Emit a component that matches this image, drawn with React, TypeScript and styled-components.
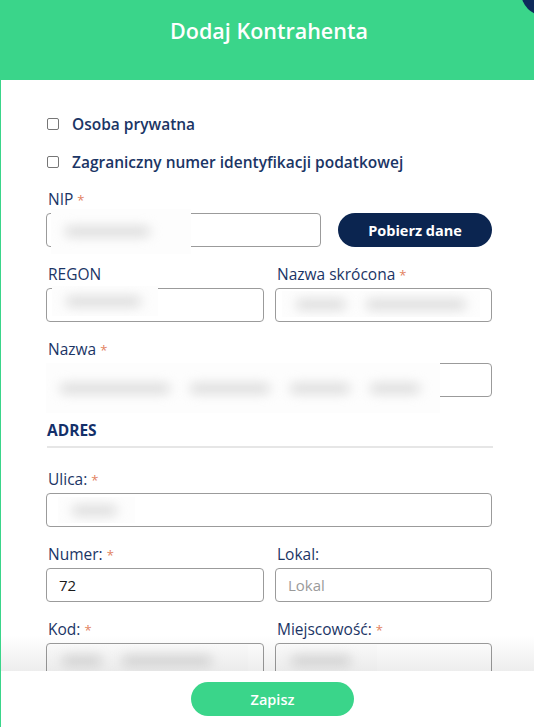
import styled, { createGlobalStyle } from 'styled-components'

const GlobalStyle = createGlobalStyle`
  html, body {
    margin: 0;
    padding: 0;
    height: 100%;
    overflow: hidden;
    background: #3ad58a;
  }
  * {
    box-sizing: border-box;
  }
`

const font = `"Open Sans", Lato, sans-serif`

const Modal = styled.div`
  position: relative;
  display: flex;
  flex-direction: column;
  width: 534px;
  height: 727px;
  background: #3ad58a;
  font-family: ${font};
  overflow: hidden;
`

const CloseDot = styled.div`
  position: absolute;
  left: 521px;
  top: -32px;
  width: 48px;
  height: 48px;
  border-radius: 50%;
  background: #0e2b5b;
`

const Header = styled.header`
  height: 80px;
  flex: none;
  display: flex;
  justify-content: center;
  padding-top: 16px;
  padding-left: 4px;
  color: #fff;
  font-size: 21.5px;
  font-weight: 600;
`

const Sheet = styled.div`
  flex: 1;
  display: flex;
  flex-direction: column;
  margin-left: 1px;
  background: #fff;
  min-height: 0;
`

const Scroll = styled.div`
  flex: 1;
  min-height: 0;
  overflow: hidden;
  padding: 33px 41px 0 45px;
`

const CheckRow = styled.label`
  display: flex;
  align-items: center;
  gap: 13px;
  height: 22px;
  margin-left: 1px;
  margin-bottom: 16px;
  color: #1b3565;
  font-size: 15.5px;
  font-weight: 600;
`

const Box = styled.span`
  width: 12px;
  height: 12px;
  border: 1px solid #767676;
  border-radius: 2px;
  background: #fff;
`

const Row = styled.div<{ $cols: string; $gap?: number }>`
  display: grid;
  grid-template-columns: ${p => p.$cols};
  column-gap: ${p => p.$gap ?? 11}px;
  align-items: end;
  margin-bottom: 17px;
`

const Field = styled.div`
  display: flex;
  flex-direction: column;
`

const Label = styled.div`
  height: 20px;
  line-height: 20px;
  margin: 0 0 4px 2px;
  color: #1b3565;
  font-size: 15.5px;
  font-weight: 500;
`

const Star = styled.span`
  color: #e2825f;
  margin-left: 4px;
  font-size: 13px;
`

const InputWrap = styled.div`
  position: relative;
  height: 34px;
`

const Input = styled.input`
  width: 100%;
  height: 34px;
  border: 1px solid #9b9b9b;
  border-radius: 4px;
  padding: 0 12px;
  font-family: ${font};
  font-size: 15px;
  color: #1a1a1a;
  background: #fff;
  outline: none;

  &::placeholder {
    color: #9a9a9a;
  }
`

const Redact = styled.div`
  position: absolute;
  display: flex;
  align-items: center;
  gap: 20px;
  padding: 0 14px;
  background: #fdfdfd;
  overflow: hidden;
`

const Blob = styled.span<{ $w: number }>`
  flex: none;
  width: ${p => p.$w}px;
  height: 9px;
  border-radius: 6px;
  background: #d6d6d6;
  filter: blur(6px);
`

const DarkButton = styled.button`
  height: 34px;
  border: none;
  border-radius: 17px;
  background: #0b2550;
  color: #fff;
  font-family: ${font};
  font-size: 14.5px;
  font-weight: 700;
  cursor: pointer;
`

const Section = styled.div`
  margin: 23px 0 0 1px;
  padding-bottom: 6px;
  border-bottom: 2px solid #e6e6e6;
  color: #14306a;
  font-size: 15.5px;
  font-weight: 700;
  line-height: 20px;
`

const SectionGap = styled.div`
  height: 21px;
`

const Footer = styled.footer`
  position: relative;
  flex: none;
  height: 56px;
  display: flex;
  justify-content: center;
  align-items: center;
  padding-left: 10px;
  background: #fff;

  &::before {
    content: '';
    position: absolute;
    left: 0;
    right: 0;
    top: -36px;
    height: 36px;
    background: linear-gradient(rgba(0, 0, 0, 0), rgba(0, 0, 0, 0.07));
  }
`

const SaveButton = styled.button`
  width: 163px;
  height: 34px;
  border: none;
  border-radius: 17px;
  background: #3ad58a;
  color: #fff;
  font-family: ${font};
  font-size: 14.5px;
  font-weight: 600;
  cursor: pointer;
`

type FieldProps = {
  label: string
  required?: boolean
  value?: string
  placeholder?: string
  redact?: { left: number; top: number; width: number; height: number; blobs: number[] }
}

function FormField({ label, required, value, placeholder, redact }: FieldProps) {
  return (
    <Field>
      <Label>
        {label}
        {required && <Star>*</Star>}
      </Label>
      <InputWrap>
        <Input defaultValue={value} placeholder={placeholder} />
        {redact && (
          <Redact
            style={{ left: redact.left, top: redact.top, width: redact.width, height: redact.height }}
          >
            {redact.blobs.map((w, i) => (
              <Blob key={i} $w={w} />
            ))}
          </Redact>
        )}
      </InputWrap>
    </Field>
  )
}

export default function App() {
  return (
    <>
      <GlobalStyle />
      <Modal>
        <CloseDot />
        <Header>Dodaj Kontrahenta</Header>
        <Sheet>
          <Scroll>
            <CheckRow>
              <Box />
              Osoba prywatna
            </CheckRow>
            <CheckRow>
              <Box />
              Zagraniczny numer identyfikacji podatkowej
            </CheckRow>

            <Row $cols="275px 154px" $gap={17}>
              <FormField
                label="NIP"
                required
                redact={{ left: 5, top: -4, width: 140, height: 45, blobs: [85] }}
              />
              <DarkButton>Pobierz dane</DarkButton>
            </Row>

            <Row $cols="218px 217px">
              <FormField
                label="REGON"
                redact={{ left: 6, top: -2, width: 106, height: 30, blobs: [75] }}
              />
              <FormField
                label="Nazwa skrócona"
                required
                redact={{ left: 7, top: 3, width: 198, height: 26, blobs: [50, 100] }}
              />
            </Row>

            <Row $cols="446px">
              <FormField
                label="Nazwa"
                required
                redact={{ left: 0, top: 0, width: 394, height: 50, blobs: [110, 80, 60, 50] }}
              />
            </Row>

            <Section>ADRES</Section>
            <SectionGap />

            <Row $cols="446px">
              <FormField
                label="Ulica:"
                required
                redact={{ left: 12, top: 4, width: 77, height: 26, blobs: [45] }}
              />
            </Row>

            <Row $cols="218px 217px">
              <FormField label="Numer:" required value="72" />
              <FormField label="Lokal:" placeholder="Lokal" />
            </Row>

            <Row $cols="218px 217px">
              <FormField
                label="Kod:"
                required
                redact={{ left: 2, top: 2, width: 200, height: 30, blobs: [40, 90] }}
              />
              <FormField
                label="Miejscowość:"
                required
                redact={{ left: 2, top: 2, width: 100, height: 30, blobs: [60] }}
              />
            </Row>
          </Scroll>
          <Footer>
            <SaveButton>Zapisz</SaveButton>
          </Footer>
        </Sheet>
      </Modal>
    </>
  )
}
